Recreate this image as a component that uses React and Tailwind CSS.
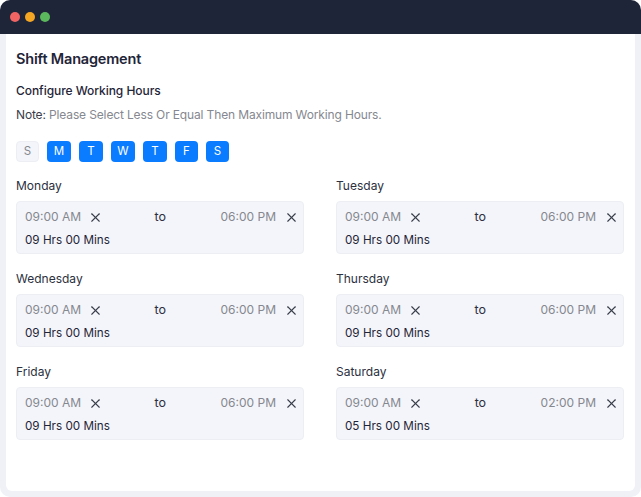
import { X } from 'lucide-react';

const days = [
  { label: 'S', active: false, w: 'w-[23px]' },
  { label: 'M', active: true, w: 'w-6' },
  { label: 'T', active: true, w: 'w-6' },
  { label: 'W', active: true, w: 'w-6' },
  { label: 'T', active: true, w: 'w-6' },
  { label: 'F', active: true, w: 'w-[23px]' },
  { label: 'S', active: true, w: 'w-[23px]' },
];

const shifts = [
  { day: 'Monday', end: '06:00 PM', total: '09 Hrs 00 Mins' },
  { day: 'Tuesday', end: '06:00 PM', total: '09 Hrs 00 Mins' },
  { day: 'Wednesday', end: '06:00 PM', total: '09 Hrs 00 Mins' },
  { day: 'Thursday', end: '06:00 PM', total: '09 Hrs 00 Mins' },
  { day: 'Friday', end: '06:00 PM', total: '09 Hrs 00 Mins' },
  { day: 'Saturday', end: '02:00 PM', total: '05 Hrs 00 Mins' },
];

function TimeValue({ value, gap = 'gap-[7px]' }) {
  return (
    <div className={`flex items-center ${gap}`}>
      <span className="text-[12px] leading-4 text-[#85888f]">{value}</span>
      <X className="w-[15px] h-[15px] text-[#3a3e4a]" strokeWidth={1.8} />
    </div>
  );
}

function ShiftCard({ shift }) {
  return (
    <div>
      <p className="text-[12px] leading-4 text-[#2c3040] mb-[7px]">{shift.day}</p>
      <div className="h-[53px] rounded-[4px] border border-[#eceef4] bg-[#f4f5fa] pl-2 pr-[4px] pt-[7px]">
        <div className="flex items-center justify-between">
          <TimeValue value="09:00 AM" />
          <span className="mr-[3px] text-[12.5px] leading-4 text-[#2c3040]">to</span>
          <TimeValue value={shift.end} gap="gap-2" />
        </div>
        <p className="mt-[7px] text-[11.7px] leading-4 text-[#1f2538]">{shift.total}</p>
      </div>
    </div>
  );
}

export default function App() {
  return (
    <div className="w-[641px] h-[497px] bg-white font-['Inter',sans-serif]">
      <div className="h-full flex flex-col rounded-[10px] overflow-hidden bg-[#eff1f6]">
        {/* Title bar */}
        <div className="h-[34px] shrink-0 bg-[#1f2538] flex items-center gap-[5px] pl-[10px]">
          <span className="w-[10px] h-[10px] rounded-full bg-[#f16464]" />
          <span className="w-[10px] h-[10px] rounded-full bg-[#f5a623]" />
          <span className="w-[10px] h-[10px] rounded-full bg-[#5cb85c]" />
        </div>

        <div className="flex-1 mx-[6px] mb-[6px] bg-white rounded-b-[6px] pl-[10px] pr-[11px] pt-4">
          <h1 className="text-[14.5px] leading-[18px] font-semibold tracking-[-0.19px] text-[#1f2538]">Shift Management</h1>
          <h2 className="mt-[15px] text-[12px] leading-4 font-medium tracking-[-0.05px] text-[#1f2538]">Configure Working Hours</h2>
          <p className="mt-2 text-[12px] leading-4 tracking-[-0.14px] text-[#85888f]">
            <span className="text-[#3a3e4a]">Note:</span> Please Select Less Or Equal Then Maximum Working Hours.
          </p>

          {/* Day picker */}
          <div className="mt-[18px] flex gap-2">
            {days.map((d, i) => (
              <div
                key={i}
                className={`h-[21px] ${d.w} flex items-center justify-center rounded-[4px] text-[11.5px] ${
                  d.active ? 'bg-[#0a7cff] text-white' : 'bg-[#f4f5fa] border border-[#eceef4] text-[#85888f]'
                }`}>
                {d.label}
              </div>
            ))}
          </div>

          {/* Shifts */}
          <div className="mt-4 grid grid-cols-2 gap-x-8 gap-y-[17px]">
            {shifts.map((s) => (
              <ShiftCard key={s.day} shift={s} />
            ))}
          </div>
        </div>
      </div>
    </div>
  );
}
